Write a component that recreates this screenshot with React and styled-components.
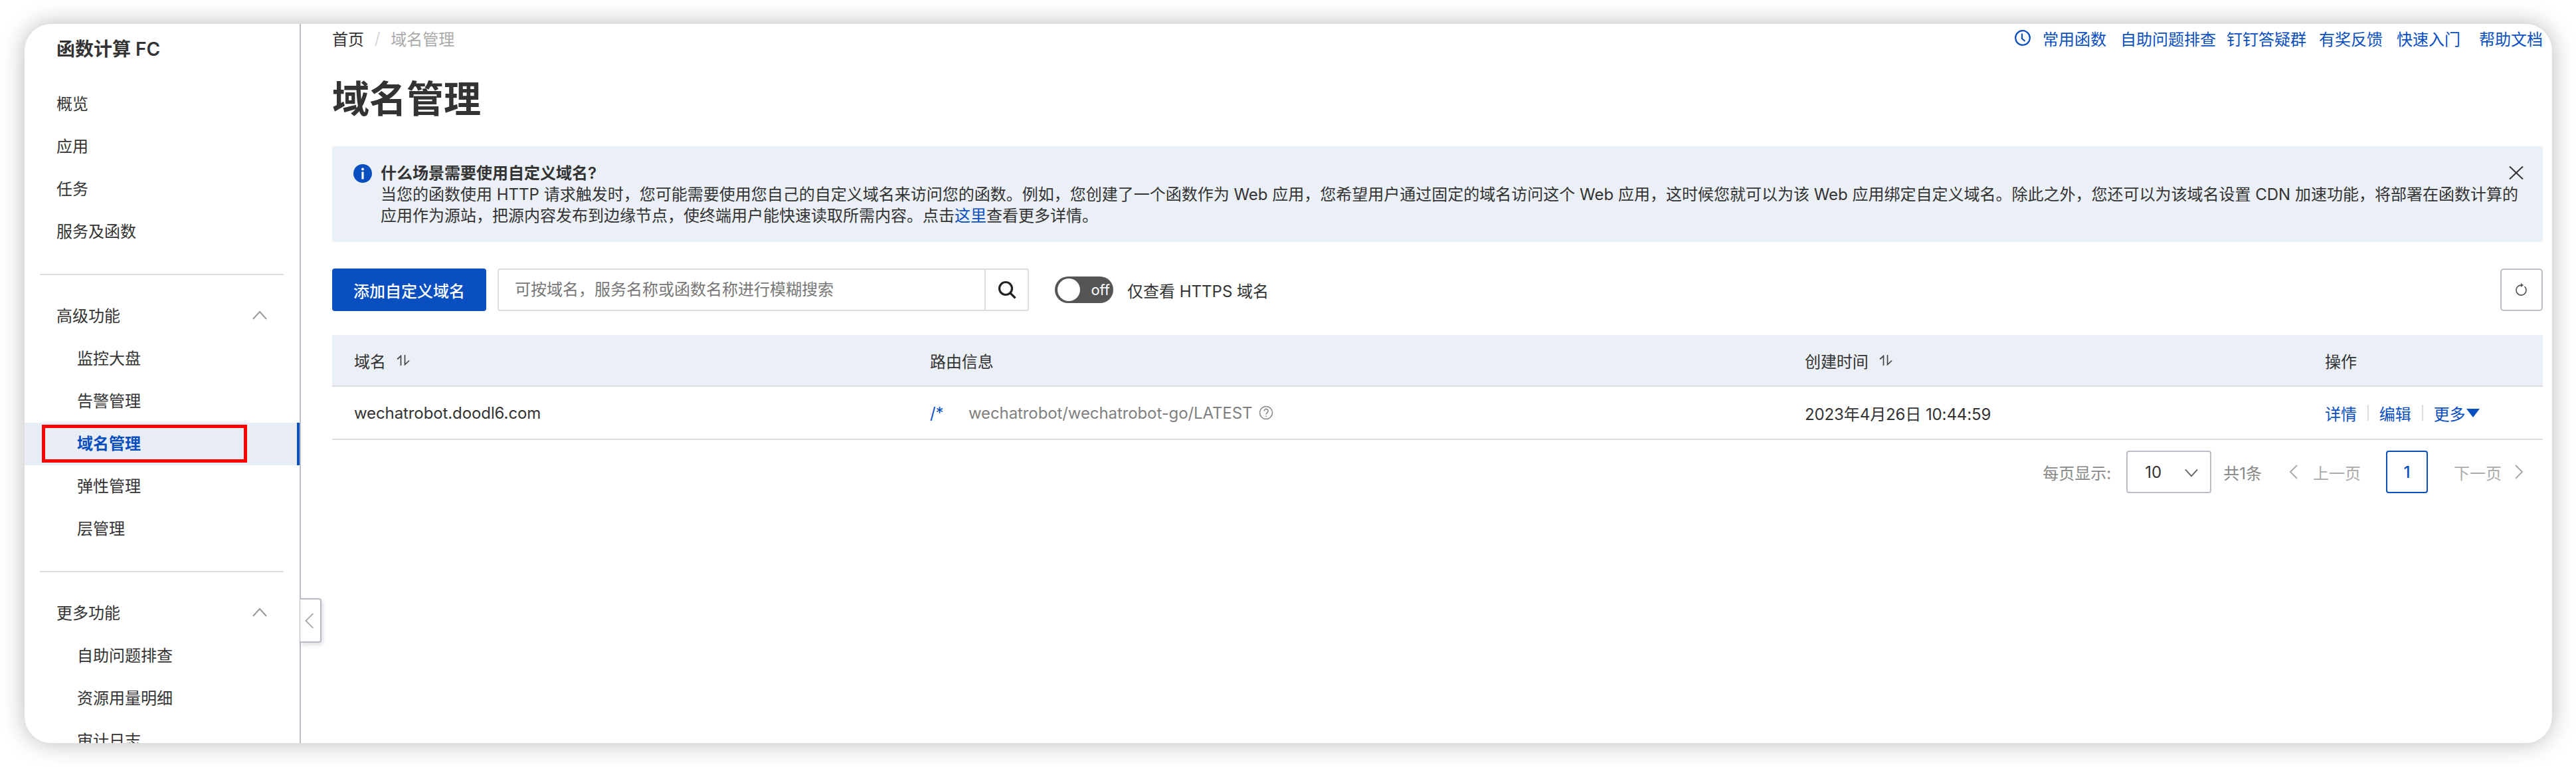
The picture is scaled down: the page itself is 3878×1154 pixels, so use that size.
import React from 'react'
import styled, { createGlobalStyle } from 'styled-components'

const BLUE = '#0a4fbf'
const TEXT = '#333333'

const GlobalStyle = createGlobalStyle`
  html, body {
    margin: 0;
    padding: 0;
    background: #ffffff;
  }
  body {
    font-family: Inter, "Noto Sans CJK SC", sans-serif;
    font-size: 24px;
    color: ${TEXT};
  }
  * {
    box-sizing: border-box;
  }
`

const Page = styled.div`
  width: 3878px;
  height: 1154px;
  padding: 36px 36px 36px 37px;
  overflow: hidden;
`

const Window = styled.div`
  position: relative;
  display: flex;
  height: 1082px;
  background: #ffffff;
  border-radius: 40px;
  box-shadow: 0 0 36px rgba(0, 0, 0, 0.28);
  overflow: hidden;
`

const Sidebar = styled.aside`
  flex: none;
  width: 416px;
  height: 100%;
  border-right: 2px solid #b9bdc6;
  overflow: hidden;
`

const SideTitle = styled.div`
  height: 89px;
  padding: 20px 0 0 48px;
  font-size: 28px;
  line-height: 36px;
  font-weight: 600;
`

const NavItem = styled.div`
  position: relative;
  height: 64px;
  padding-left: ${({ $nested }) => ($nested ? '79px' : '48px')};
  line-height: 64px;
  color: ${({ $active }) => ($active ? BLUE : TEXT)};
  font-weight: ${({ $active }) => ($active ? 600 : 400)};
  background: ${({ $active }) => ($active ? '#e9eef6' : 'transparent')};
  border-right: 4px solid ${({ $active }) => ($active ? BLUE : 'transparent')};
`

const GroupHead = styled(NavItem)`
  display: flex;
  align-items: center;
  justify-content: space-between;
  padding-right: 45px;
`

const SideDivider = styled.div`
  height: 2px;
  margin: 31px 24px 30px 23px;
  background: #dcdde2;
`

const Highlight = styled.div`
  position: absolute;
  left: 26px;
  top: 3px;
  width: 309px;
  height: 57px;
  border: 5px solid #ff0000;
`

const CollapseTab = styled.div`
  position: absolute;
  left: 415px;
  top: 864px;
  width: 32px;
  height: 67px;
  display: flex;
  align-items: center;
  justify-content: center;
  background: #ffffff;
  border: 2px solid #b9bdc6;
  border-left: none;
  border-radius: 0 4px 4px 0;
  box-shadow: 2px 3px 6px rgba(0, 0, 0, 0.14);
`

const Main = styled.main`
  flex: 1;
  min-width: 0;
  padding: 0 14px 0 47px;
`

const TopRow = styled.div`
  display: flex;
  align-items: center;
  justify-content: space-between;
  height: 42px;
`

const Breadcrumb = styled.div`
  display: flex;
  align-items: center;
  gap: 16px;
`

const CrumbMuted = styled.span`
  color: #aaaaaa;
`

const CrumbSep = styled.span`
  color: #cccccc;
  font-weight: 300;
`

const HelpLinks = styled.nav`
  display: flex;
  align-items: center;
`

const HelpLink = styled.span`
  display: flex;
  align-items: center;
  gap: 18px;
  margin-left: ${({ $gap }) => $gap}px;
  color: ${BLUE};
`

const Title = styled.h1`
  margin: 31px 0 0;
  height: 80px;
  font-size: 56px;
  line-height: 80px;
  font-weight: 600;
`

const Notice = styled.div`
  position: relative;
  margin-top: 31px;
  height: 144px;
  padding: 25px 40px 0 73px;
  background: #ebeff6;
  border-radius: 4px;
  line-height: 32px;
  white-space: nowrap;
`

const NoticeTitle = styled.div`
  font-weight: 600;
`

const NoticeIcon = styled.span`
  position: absolute;
  left: 32px;
  top: 27px;
  line-height: 0;
`

const NoticeClose = styled.span`
  position: absolute;
  right: 29px;
  top: 30px;
  line-height: 0;
`

const InlineLink = styled.span`
  color: ${BLUE};
`

const Toolbar = styled.div`
  display: flex;
  align-items: center;
  margin-top: 40px;
  height: 64px;
`

const PrimaryButton = styled.button`
  width: 232px;
  height: 64px;
  border: none;
  border-radius: 4px;
  background: ${BLUE};
  color: #ffffff;
  font: 500 24px Inter, "Noto Sans CJK SC", sans-serif;
`

const SearchBox = styled.div`
  display: flex;
  width: 800px;
  height: 64px;
  margin-left: 17px;
  border: 2px solid #dcdde2;
  border-radius: 4px;
`

const SearchText = styled.div`
  flex: 1;
  padding-left: 24px;
  line-height: 60px;
  color: #777777;
`

const SearchAction = styled.div`
  display: flex;
  align-items: center;
  justify-content: center;
  width: 65px;
  border-left: 2px solid #dcdde2;
`

const Switch = styled.div`
  display: flex;
  align-items: center;
  justify-content: flex-end;
  width: 88px;
  height: 40px;
  margin-left: 39px;
  padding-right: 5px;
  position: relative;
  background: #555555;
  border-radius: 20px;
  color: #ffffff;
  font-size: 22px;
`

const SwitchKnob = styled.span`
  position: absolute;
  left: 4px;
  top: 3px;
  width: 34px;
  height: 34px;
  border-radius: 50%;
  background: #ffffff;
`

const SwitchLabel = styled.span`
  margin-left: 21px;
`

const RefreshButton = styled.div`
  display: flex;
  align-items: center;
  justify-content: center;
  width: 64px;
  height: 64px;
  margin-left: auto;
  border: 2px solid #b9bdc6;
  border-radius: 5px;
`

const Table = styled.div`
  margin-top: 36px;
`

const Row = styled.div`
  display: grid;
  grid-template-columns: 867px 1317px 783px 361px;
  align-items: center;
  height: ${({ $head }) => ($head ? '78px' : '80px')};
  background: ${({ $head }) => ($head ? '#ebeff6' : '#ffffff')};
  border-bottom: 2px solid #dcdde2;
`

const Cell = styled.div`
  display: flex;
  align-items: center;
  padding-left: 33px;
  letter-spacing: -0.1px;
`

const SortMark = styled.span`
  display: flex;
  margin-left: 16px;
`

const RoutePath = styled.span`
  width: 58px;
  color: ${BLUE};
`

const RouteTarget = styled.span`
  color: #808080;
`

const HelpMark = styled.span`
  display: flex;
  margin-left: 9px;
`

const ActionLink = styled.span`
  color: ${BLUE};
`

const ActionSep = styled.span`
  width: 2px;
  height: 24px;
  margin: 0 16px;
  background: #dcdde2;
`

const Caret = styled.span`
  width: 0;
  height: 0;
  margin-left: 2px;
  border-left: 10px solid transparent;
  border-right: 10px solid transparent;
  border-top: 13px solid ${BLUE};
`

const Pagination = styled.div`
  display: flex;
  align-items: center;
  justify-content: flex-end;
  margin-top: 16px;
  padding-right: 26px;
  height: 64px;
  color: #888888;
`

const PerPage = styled.div`
  display: flex;
  align-items: center;
  justify-content: space-between;
  width: 128px;
  height: 64px;
  margin: 0 18px 0 23px;
  padding: 0 18px 0 26px;
  border: 2px solid #b9bdc6;
  border-radius: 4px;
  color: ${TEXT};
`

const PagerStep = styled.span`
  display: flex;
  align-items: center;
  gap: ${({ $inner }) => $inner}px;
  color: #aaaaaa;
  margin-left: ${({ $gap }) => $gap}px;
`

const PageNumber = styled.div`
  display: flex;
  align-items: center;
  justify-content: center;
  width: 63px;
  height: 64px;
  margin-left: 38px;
  border: 2px solid ${BLUE};
  border-radius: 4px;
  color: ${BLUE};
  font-weight: 500;
`

const Chevron = ({ dir = 'up', size = 22, color = '#999999', width = 2 }) => {
  const paths = {
    up: 'M1 15 L11 4 L21 15',
    down: 'M1 7 L11 18 L21 7',
    left: 'M15 1 L5 11 L15 21',
    right: 'M7 1 L17 11 L7 21',
  }
  return (
    <svg width={size} height={size} viewBox="0 0 22 22" fill="none" stroke={color} strokeWidth={width * (22 / size)}>
      <path d={paths[dir]} />
    </svg>
  )
}

const SortIcon = () => (
  <svg width="20" height="16" viewBox="0 0 20 16" fill="none" stroke="#444444" strokeWidth="1.7">
    <path d="M6.5 16V1.5L1 6.5" />
    <path d="M12.5 0v14.5L19 8.5" />
  </svg>
)

const InfoIcon = () => (
  <svg width="28" height="28" viewBox="0 0 28 28">
    <circle cx="14" cy="14" r="14" fill={BLUE} />
    <circle cx="14" cy="7.5" r="2" fill="#ffffff" />
    <rect x="12.4" y="11.5" width="3.2" height="11" fill="#ffffff" />
  </svg>
)

const CloseIcon = () => (
  <svg width="22" height="20" viewBox="0 0 22 20" fill="none" stroke="#333333" strokeWidth="2">
    <path d="M1 0.5 L21 19.5 M21 0.5 L1 19.5" />
  </svg>
)

const ClockIcon = () => (
  <svg width="24" height="24" viewBox="0 0 24 24" fill="none" stroke={BLUE} strokeWidth="2.2">
    <circle cx="12" cy="12" r="10.8" />
    <path d="M11 5.5V13l4.5 4" />
  </svg>
)

const SearchIcon = () => (
  <svg width="28" height="28" viewBox="0 0 28 28" fill="none" stroke="#222222" strokeWidth="3.2">
    <circle cx="12" cy="12" r="9.5" />
    <path d="M19 19l7.5 7.5" />
  </svg>
)

const RefreshIcon = () => (
  <svg width="20" height="22" viewBox="0 0 20 22" fill="none" stroke="#555555" strokeWidth="1.6">
    <path d="M14.5 6A7.5 7.5 0 1 1 9 4.1" />
    <path d="M9 1l4 3.1-4 3.1z" fill="#555555" stroke="none" />
  </svg>
)

const QuestionIcon = () => (
  <svg width="24" height="24" viewBox="0 0 24 24" fill="none" stroke="#888888" strokeWidth="1.6">
    <circle cx="12" cy="12" r="9.5" />
    <path d="M9 9.5a3 3 0 1 1 4.6 2.5c-1 .7-1.6 1.2-1.6 2.5" />
    <path d="M12 16.5v1.6" />
  </svg>
)

const basicNav = ['概览', '应用', '任务', '服务及函数']
const advancedNav = ['监控大盘', '告警管理', '域名管理', '弹性管理', '层管理']
const moreNav = ['自助问题排查', '资源用量明细', '审计日志']

const helpLinks = [
  { label: '自助问题排查', gap: 21 },
  { label: '钉钉答疑群', gap: 16 },
  { label: '有奖反馈', gap: 19 },
  { label: '快速入门', gap: 21 },
  { label: '帮助文档', gap: 28 },
]

export default function App() {
  return (
    <Page>
      <GlobalStyle />
      <Window>
        <Sidebar>
          <SideTitle>函数计算 FC</SideTitle>
          {basicNav.map((name) => (
            <NavItem key={name}>{name}</NavItem>
          ))}
          <SideDivider />
          <GroupHead>
            高级功能
            <Chevron />
          </GroupHead>
          {advancedNav.map((name) => (
            <NavItem key={name} $nested $active={name === '域名管理'}>
              {name}
              {name === '域名管理' && <Highlight />}
            </NavItem>
          ))}
          <SideDivider />
          <GroupHead>
            更多功能
            <Chevron />
          </GroupHead>
          {moreNav.map((name) => (
            <NavItem key={name} $nested>
              {name}
            </NavItem>
          ))}
        </Sidebar>
        <CollapseTab>
          <Chevron dir="left" size={24} color="#aaaaaa" />
        </CollapseTab>
        <Main>
          <TopRow>
            <Breadcrumb>
              <span>首页</span>
              <CrumbSep>/</CrumbSep>
              <CrumbMuted>域名管理</CrumbMuted>
            </Breadcrumb>
            <HelpLinks>
              <HelpLink>
                <ClockIcon />
                常用函数
              </HelpLink>
              {helpLinks.map((link) => (
                <HelpLink key={link.label} $gap={link.gap}>
                  {link.label}
                </HelpLink>
              ))}
            </HelpLinks>
          </TopRow>
          <Title>域名管理</Title>
          <Notice>
            <NoticeIcon>
              <InfoIcon />
            </NoticeIcon>
            <NoticeClose>
              <CloseIcon />
            </NoticeClose>
            <NoticeTitle>什么场景需要使用自定义域名?</NoticeTitle>
            <div>
              当您的函数使用 HTTP 请求触发时，您可能需要使用您自己的自定义域名来访问您的函数。例如，您创建了一个函数作为 Web 应用，您希望用户通过固定的域名访问这个 Web 应用，这时候您就可以为该 Web 应用绑定自定义域名。除此之外，您还可以为该域名设置 CDN 加速功能，将部署在函数计算的
            </div>
            <div>
              应用作为源站，把源内容发布到边缘节点，使终端用户能快速读取所需内容。点击<InlineLink>这里</InlineLink>查看更多详情。
            </div>
          </Notice>
          <Toolbar>
            <PrimaryButton>添加自定义域名</PrimaryButton>
            <SearchBox>
              <SearchText>可按域名，服务名称或函数名称进行模糊搜索</SearchText>
              <SearchAction>
                <SearchIcon />
              </SearchAction>
            </SearchBox>
            <Switch>
              <SwitchKnob />
              off
            </Switch>
            <SwitchLabel>仅查看 HTTPS 域名</SwitchLabel>
            <RefreshButton>
              <RefreshIcon />
            </RefreshButton>
          </Toolbar>
          <Table>
            <Row $head>
              <Cell>
                域名
                <SortMark>
                  <SortIcon />
                </SortMark>
              </Cell>
              <Cell>路由信息</Cell>
              <Cell>
                创建时间
                <SortMark>
                  <SortIcon />
                </SortMark>
              </Cell>
              <Cell>操作</Cell>
            </Row>
            <Row>
              <Cell>wechatrobot.doodl6.com</Cell>
              <Cell>
                <RoutePath>/*</RoutePath>
                <RouteTarget>wechatrobot/wechatrobot-go/LATEST</RouteTarget>
                <HelpMark>
                  <QuestionIcon />
                </HelpMark>
              </Cell>
              <Cell>2023年4月26日 10:44:59</Cell>
              <Cell>
                <ActionLink>详情</ActionLink>
                <ActionSep />
                <ActionLink>编辑</ActionLink>
                <ActionSep />
                <ActionLink>更多</ActionLink>
                <Caret />
              </Cell>
            </Row>
          </Table>
          <Pagination>
            每页显示:
            <PerPage>
              10
              <Chevron dir="down" size={20} color="#666666" />
            </PerPage>
            共1条
            <PagerStep $gap={38} $inner={17}>
              <Chevron dir="left" size={22} color="#aaaaaa" />
              上一页
            </PagerStep>
            <PageNumber>1</PageNumber>
            <PagerStep $gap={39} $inner={14}>
              下一页
              <Chevron dir="right" size={22} color="#aaaaaa" />
            </PagerStep>
          </Pagination>
        </Main>
      </Window>
    </Page>
  )
}
